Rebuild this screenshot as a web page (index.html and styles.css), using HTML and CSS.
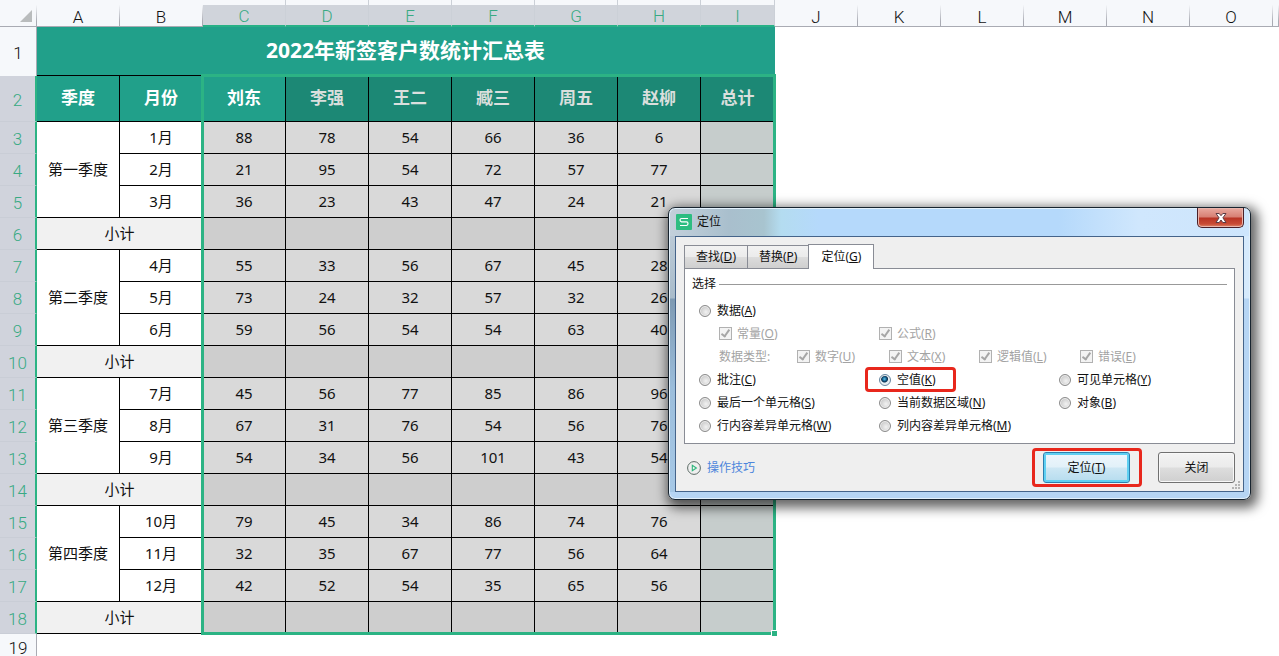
FILE: index.html
```
<!DOCTYPE html>
<html lang="zh-CN">
<head>
<meta charset="utf-8">
<title>2022年新签客户数统计汇总表</title>
<link rel="stylesheet" href="styles.css">
</head>
<body>
<main class="sheet">
<table class="grid">
<colgroup>
<col class="w-head"><col class="w-col"><col class="w-col"><col class="w-col"><col class="w-col"><col class="w-col"><col class="w-col"><col class="w-col"><col class="w-col"><col class="w-total"><col class="w-col"><col class="w-col"><col class="w-col"><col class="w-col"><col class="w-col"><col class="w-col"><col>
</colgroup>
<thead>
<tr class="letters"><th class="corner"><svg width="12" height="12" viewBox="0 0 12 12"><path d="M12 0V12H0Z" fill="#b9bcbd"/></svg></th><th>A</th><th>B</th><th class="sel">C</th><th class="sel">D</th><th class="sel">E</th><th class="sel">F</th><th class="sel">G</th><th class="sel">H</th><th class="sel">I</th><th>J</th><th>K</th><th>L</th><th>M</th><th>N</th><th>O</th><th></th></tr>
</thead>
<tbody>
<tr class="title-row"><th class="num">1</th><td class="title" colspan="9">2022年新签客户数统计汇总表</td></tr>
<tr class="head-row"><th class="num sel">2</th><td class="active">季度</td><td class="active">月份</td><td class="active">刘东</td><td>李强</td><td>王二</td><td>臧三</td><td>周五</td><td>赵柳</td><td>总计</td></tr>
<tr><th class="num sel">3</th><td rowspan="3">第一季度</td><td>1月</td><td class="v">88</td><td class="v">78</td><td class="v">54</td><td class="v">66</td><td class="v">36</td><td class="v">6</td><td class="total"></td></tr>
<tr><th class="num sel">4</th><td>2月</td><td class="v">21</td><td class="v">95</td><td class="v">54</td><td class="v">72</td><td class="v">57</td><td class="v">77</td><td class="total"></td></tr>
<tr><th class="num sel">5</th><td>3月</td><td class="v">36</td><td class="v">23</td><td class="v">43</td><td class="v">47</td><td class="v">24</td><td class="v">21</td><td class="total"></td></tr>
<tr class="sub"><th class="num sel">6</th><td class="sublabel" colspan="2">小计</td><td></td><td></td><td></td><td></td><td></td><td></td><td class="total"></td></tr>
<tr><th class="num sel">7</th><td rowspan="3">第二季度</td><td>4月</td><td class="v">55</td><td class="v">33</td><td class="v">56</td><td class="v">67</td><td class="v">45</td><td class="v">28</td><td class="total"></td></tr>
<tr><th class="num sel">8</th><td>5月</td><td class="v">73</td><td class="v">24</td><td class="v">32</td><td class="v">57</td><td class="v">32</td><td class="v">26</td><td class="total"></td></tr>
<tr><th class="num sel">9</th><td>6月</td><td class="v">59</td><td class="v">56</td><td class="v">54</td><td class="v">54</td><td class="v">63</td><td class="v">40</td><td class="total"></td></tr>
<tr class="sub"><th class="num sel">10</th><td class="sublabel" colspan="2">小计</td><td></td><td></td><td></td><td></td><td></td><td></td><td class="total"></td></tr>
<tr><th class="num sel">11</th><td rowspan="3">第三季度</td><td>7月</td><td class="v">45</td><td class="v">56</td><td class="v">77</td><td class="v">85</td><td class="v">86</td><td class="v">96</td><td class="total"></td></tr>
<tr><th class="num sel">12</th><td>8月</td><td class="v">67</td><td class="v">31</td><td class="v">76</td><td class="v">54</td><td class="v">56</td><td class="v">76</td><td class="total"></td></tr>
<tr><th class="num sel">13</th><td>9月</td><td class="v">54</td><td class="v">34</td><td class="v">56</td><td class="v">101</td><td class="v">43</td><td class="v">54</td><td class="total"></td></tr>
<tr class="sub"><th class="num sel">14</th><td class="sublabel" colspan="2">小计</td><td></td><td></td><td></td><td></td><td></td><td></td><td class="total"></td></tr>
<tr><th class="num sel">15</th><td rowspan="3">第四季度</td><td>10月</td><td class="v">79</td><td class="v">45</td><td class="v">34</td><td class="v">86</td><td class="v">74</td><td class="v">76</td><td class="total"></td></tr>
<tr><th class="num sel">16</th><td>11月</td><td class="v">32</td><td class="v">35</td><td class="v">67</td><td class="v">77</td><td class="v">56</td><td class="v">64</td><td class="total"></td></tr>
<tr><th class="num sel">17</th><td>12月</td><td class="v">42</td><td class="v">52</td><td class="v">54</td><td class="v">35</td><td class="v">65</td><td class="v">56</td><td class="total"></td></tr>
<tr class="sub"><th class="num sel">18</th><td class="sublabel" colspan="2">小计</td><td></td><td></td><td></td><td></td><td></td><td></td><td class="total"></td></tr>
<tr class="last"><th class="num">19</th></tr>
</tbody>
</table>
<div class="selection"></div>

<section class="dialog" role="dialog" aria-labelledby="dlg-title">
<header class="titlebar">
<svg class="logo" width="16" height="16" viewBox="0 0 16 16"><rect width="16" height="16" rx="1" fill="#2dbd81"/><path d="M12 4.500H5.500Q4 4.500 4 6T5.500 7.800H10.500Q12 7.800 12 9.600T10.500 11.500H4" fill="none" stroke="#fff" stroke-width="1.200"/></svg>
<h1 id="dlg-title">定位</h1>
<button class="close" type="button" aria-label="关闭窗口"><svg width="12" height="10" viewBox="0 0 12 10"><path d="M1 .5H4.200L6 2.700 7.800 .5H11L7.900 4.800 11 9.500H7.800L6 7 4.200 9.500H1L4.100 4.800Z" fill="#fff" stroke="#5b3c45" stroke-width="1"/></svg></button>
</header>
<form class="client">
<nav class="tabs"><button type="button">查找(<u>D</u>)</button><button type="button">替换(<u>P</u>)</button><button type="button" class="current">定位(<u>G</u>)</button></nav>
<div class="page">
<div class="group"><span>选择</span><hr></div>
<div class="options">
<label><input type="radio" name="kind"><span>数据(<u>A</u>)</span></label>
<div class="row checks">
<label><input type="checkbox" checked disabled><span>常量(<u>O</u>)</span></label>
<label><input type="checkbox" checked disabled><span>公式(<u>R</u>)</span></label>
</div>
<div class="row types">
<span>数据类型:</span>
<label><input type="checkbox" checked disabled><span>数字(<u>U</u>)</span></label>
<label><input type="checkbox" checked disabled><span>文本(<u>X</u>)</span></label>
<label><input type="checkbox" checked disabled><span>逻辑值(<u>L</u>)</span></label>
<label><input type="checkbox" checked disabled><span>错误(<u>E</u>)</span></label>
</div>
<div class="row thirds">
<label><input type="radio" name="kind"><span>批注(<u>C</u>)</span></label>
<label class="marked"><input type="radio" name="kind" checked><span>空值(<u>K</u>)</span></label>
<label><input type="radio" name="kind"><span>可见单元格(<u>Y</u>)</span></label>
<label><input type="radio" name="kind"><span>最后一个单元格(<u>S</u>)</span></label>
<label><input type="radio" name="kind"><span>当前数据区域(<u>N</u>)</span></label>
<label><input type="radio" name="kind"><span>对象(<u>B</u>)</span></label>
<label><input type="radio" name="kind"><span>行内容差异单元格(<u>W</u>)</span></label>
<label><input type="radio" name="kind"><span>列内容差异单元格(<u>M</u>)</span></label>
</div>
</div>
</div>
<footer class="actions">
<a class="tips" href="#"><svg width="14" height="14" viewBox="0 0 14 14" fill="none"><circle cx="7" cy="7" r="6.400" stroke="#5c6b66" stroke-width="1"/><path d="M5.300 4.200V9.800L9.400 7Z" stroke="#2db67c" stroke-width="1.100"/></svg>操作技巧</a>
<span class="marked-button"><button class="btn primary" type="button">定位(<u>T</u>)</button></span>
<button class="btn" type="button">关闭</button>
</footer>
<svg class="grip" width="8" height="8" viewBox="0 0 8 8" fill="#b4b4b4"><path d="M6 0h2v2H6zM3 3h2v2H3zM6 3h2v2H6zM0 6h2v2H0zM3 6h2v2H3zM6 6h2v2H6z"/></svg>
</form>
</section>
</main>
</body>
</html>
```
FILE: styles.css
```
*, *::before, *::after { box-sizing: border-box; }

body {
  margin: 0;
  font-family: "Noto Sans", "Noto Sans CJK SC", sans-serif;
  color: #111;
}

.sheet {
  position: relative;
  height: 100vh;
  overflow: hidden;
  background: #fff;
}

/* Spreadsheet */
.grid {
  width: 100%;
  table-layout: fixed;
  border-collapse: separate;
  border-spacing: 0;
  font-size: 15px;
  line-height: 20px;
}

.w-head { width: 37px; }
.w-col { width: 83px; }
.w-total { width: 74px; }

.grid tr { height: 32px; }
.grid th, .grid td { padding: 0; text-align: center; }

.grid .letters { height: 27px; }
.grid .title-row { height: 49px; }
.grid .head-row { height: 46px; }
.grid .last { height: 24px; }

.grid th {
  font-family: Roboto, "Noto Sans", sans-serif;
  font-size: 17px;
  font-weight: 300;
  line-height: 18px;
  color: #111;
}

.grid .letters th {
  padding-top: 7px;
  background: #f6f8fb;
  border-bottom: 1px solid #a9abb3;
  border-right: 1px solid;
  border-image: linear-gradient(#f6f8fb 20%, #a9abb3 80%) 1;
}

.grid .letters .sel {
  color: #38aa83;
  background: linear-gradient(#f6f8fb 5px, #d0d4db 5px);
  border-image: none;
  border-right-color: #cbd0d7;
  border-bottom: 2px solid #27b086;
}

.grid .letters .corner { padding: 6px 4px 0 0; }
.corner svg { display: block; margin-left: auto; }

.grid .num {
  padding-top: 3px;
  background: #f6f8fb;
  border-right: 1px solid #a9abb3;
}

.grid .num.sel {
  color: #38aa83;
  background: #d0d3dc;
  border-bottom: 1px solid #c9cdd6;
  border-right: 2px solid #2cb384;
}

.grid td {
  padding-bottom: 1px;
  border-right: 1px solid #000;
  border-bottom: 1px solid #000;
}

.grid .title {
  padding-bottom: 3px;
  background: #21a08a;
  color: #fff;
  font-size: 21px;
  font-weight: 700;
  border-right-color: #21a08a;
}

.head-row td {
  background: #1c8875;
  color: #dadfdd;
  font-size: 17px;
  font-weight: 700;
}

.head-row .active { background: #21a08a; color: #fff; }

.grid .v { background: #d9d9d9; }
.sub td { background: #cecece; }
.sub .sublabel { background: #f1f1f1; }
.grid .total { background: #c6cdcc; }

.selection {
  position: absolute;
  left: 201px;
  top: 74px;
  width: 575px;
  height: 561px;
  border: 3px solid #2cb384;
}

.selection::after {
  content: "";
  position: absolute;
  right: -4px;
  bottom: -4px;
  width: 6px;
  height: 6px;
  background: #2cb384;
  border-left: 1px solid #fff;
  border-top: 1px solid #fff;
}

/* Dialog */
.dialog {
  position: absolute;
  left: 668px;
  top: 207px;
  width: 583px;
  padding: 0 6px 7px;
  border: 1px solid #18242f;
  border-radius: 7px;
  font-size: 12px;
  line-height: 18px;
  background:
    linear-gradient(90deg, #c3d0db 0, #a9bfcd 60px, #a8c4cf 95px, #b4dcf0 112px, #b5d9fb 150px, #b5d9fb 390px, #d0e7fd 470px, #cde5fc) top / 100% 28px no-repeat,
    linear-gradient(#b6d5f4, #b6d5f4) bottom / 100% 7px no-repeat,
    linear-gradient(#c3d0db, #a9bccb 90px, #7e9ab3 91px, #9bbddb 180px, #a7c9e7) left / 50% 100% no-repeat,
    linear-gradient(#d6eafc 90px, #b6d5f4 91px) right / 50% 100% no-repeat;
  box-shadow: inset 0 0 0 1px #e3f1fc, 3px 4px 12px 4px rgba(0, 0, 0, .6);
}

.titlebar {
  display: flex;
  align-items: flex-start;
  height: 28px;
}

.logo { margin-top: 6px; margin-left: 1px; }

.titlebar h1 {
  margin: 5px 0 0 5px;
  font-size: 12px;
  font-weight: 400;
}

.close {
  display: flex;
  align-items: center;
  justify-content: center;
  width: 47px;
  height: 20px;
  margin-left: auto;
  padding: 0;
  border: 1px solid #4a2029;
  border-top: 0;
  border-radius: 0 0 5px 5px;
  background: linear-gradient(#e9aaa0, #d77f73 9px, #b83425 10px, #c94b35 16px, #df8a6c);
  box-shadow: inset 0 0 0 1px #e9b5ac;
}

.client {
  position: relative;
  padding: 7px 8px 4px;
  border: 1px solid #45648a;
  background: #efefef;
}

.tabs { display: flex; align-items: flex-end; margin-bottom: -1px; }

.tabs button {
  height: 24px;
  padding: 0 11px;
  border: 1px solid #898c95;
  border-right-width: 0;
  background: linear-gradient(#f2f2f2, #ebebeb 50%, #dcdcdc 51%, #cfcfcf);
  font: inherit;
  color: #111;
}

.tabs .current {
  position: relative;
  height: 25px;
  padding: 0 12px;
  border-right-width: 1px;
  border-bottom: 0;
  background: #fff;
}

.page {
  padding: 6px 7px;
  border: 1px solid #898c95;
  background: #fff;
}

.group { display: flex; align-items: center; gap: 3px; }
.group hr { flex: 1; margin: 0; border: 0; border-top: 1px solid #999; }

.options { padding: 6px 0 0 7px; }
.options label { display: flex; align-items: center; gap: 6px; height: 23px; }
.row { display: grid; color: #a3a3a3; }
.checks { grid-template-columns: 160px 1fr; padding-left: 20px; }
.types { grid-template-columns: 78px 92px 90px 101px 1fr; align-items: center; padding-left: 20px; }
.thirds { grid-template-columns: repeat(3, 180px); color: #111; }
.options .row:not(.thirds) label { gap: 5px; }

input { appearance: none; flex: none; margin: 0; }

input[type="radio"] {
  width: 12px;
  height: 12px;
  border: 1px solid #8b8b8b;
  border-radius: 50%;
  background: radial-gradient(circle at 60% 60%, #f2f2f2, #b9b9b9);
  box-shadow: inset 0 0 0 1px #eee;
}

input[type="radio"]:checked {
  border-color: #6686a0;
  background: radial-gradient(circle at 45% 40%, #65c5ea 0, #14618f 2px, #0d2e4d 3px, #e3edf3 4px);
}

input[type="checkbox"] {
  position: relative;
  width: 13px;
  height: 13px;
  border: 1px solid #b1b1b1;
  background: #f3f3f3;
}

input[type="checkbox"]::after {
  content: "";
  position: absolute;
  left: 3px;
  top: 0;
  width: 5px;
  height: 9px;
  border: solid #a6a6a6;
  border-width: 0 2px 2px 0;
  transform: rotate(35deg);
}

.marked { position: relative; }

.marked::before {
  content: "";
  position: absolute;
  left: -14px;
  top: -1px;
  width: 91px;
  height: 25px;
  border: 3px solid #e8271c;
  border-radius: 4px;
}

.actions {
  display: flex;
  align-items: center;
  padding: 4px 0 0 3px;
}

.tips {
  display: flex;
  align-items: center;
  gap: 6px;
  margin-right: auto;
  color: #4d86dc;
  text-decoration: none;
}

.marked-button {
  padding: 1px 9px 1px 8px;
  margin-right: 16px;
  border: 3px solid #e8271c;
  border-radius: 4px;
}

.btn {
  display: block;
  width: 77px;
  height: 31px;
  padding: 0;
  border: 1px solid #707070;
  border-radius: 3px;
  background: linear-gradient(#f3f3f3, #ebebeb 48%, #dddddd 52%, #cfcfcf);
  box-shadow: inset 0 0 0 1px #f8f8f8;
  font: inherit;
  color: #111;
}

.primary {
  width: 87px;
  border-color: #2c7fae;
  background: linear-gradient(#eef7fc, #e2f1f9 48%, #cde7f4 52%, #b5dcee);
  box-shadow: inset 0 0 0 2px #5fd0f2;
}

.grip { position: absolute; right: 3px; bottom: 2px; }
```
